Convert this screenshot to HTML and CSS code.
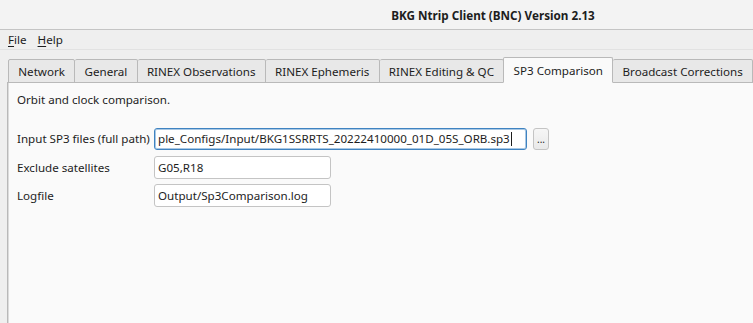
FILE: index.html
```html
<!DOCTYPE html>
<html lang="en">

<head>
  <meta charset="UTF-8">
  <meta name="viewport" content="width=device-width, initial-scale=1.0">
  <title>BKG Ntrip Client (BNC) Version 2.13</title>
  <link rel="stylesheet" href="styles.css">
</head>

<body>
  <header class="titlebar">
    <h1 class="window-title">BKG Ntrip Client (BNC) Version 2.13</h1>
  </header>

  <nav class="menubar">
    <span class="menu-item"><u>F</u>ile</span>
    <span class="menu-item"><u>H</u>elp</span>
  </nav>

  <main class="tab-widget">
    <ul class="tab-bar">
      <li class="tab">Network</li>
      <li class="tab">General</li>
      <li class="tab">RINEX Observations</li>
      <li class="tab">RINEX Ephemeris</li>
      <li class="tab">RINEX Editing &amp; QC</li>
      <li class="tab tab-active">SP3 Comparison</li>
      <li class="tab">Broadcast Corrections</li>
    </ul>

    <section class="tab-panel">
      <p class="panel-intro">Orbit and clock comparison.</p>

      <div class="form-grid">
        <label class="field-label">Input SP3 files (full path)</label>
        <div class="field-row">
          <div class="text-input input-wide input-focus">ple_Configs/Input/BKG1SSRRTS_20222410000_01D_05S_ORB.sp3<span class="caret"></span></div>
          <button class="browse-btn">...</button>
        </div>

        <label class="field-label">Exclude satellites</label>
        <div class="field-row">
          <div class="text-input">G05,R18</div>
        </div>

        <label class="field-label">Logfile</label>
        <div class="field-row">
          <div class="text-input">Output/Sp3Comparison.log</div>
        </div>
      </div>
    </section>
  </main>
</body>

</html>
```

FILE: styles.css
```css
*,
*::before,
*::after {
  box-sizing: border-box;
}

body,
h1,
p,
ul {
  margin: 0;
  padding: 0;
}

:root {
  /* COLORS */
  --bg-window: #efefef;
  --bg-title: #f3f3f3;
  --bg-panel: #fafafa;
  --bg-tab: #e8e8e8;
  --bg-input: #ffffff;

  --border-soft: #c4c4c4;
  --border-tab: #b9b9b9;
  --border-focus: #3f83c1;

  --text-main: #1d1d1d;

  /* FONT */
  --ff-ui: 'Noto Sans', 'Open Sans', sans-serif;
  --fs-ui: 11.6px;
}

body {
  height: 323px;
  overflow: hidden;

  display: flex;
  flex-direction: column;

  font-family: var(--ff-ui);
  font-size: var(--fs-ui);
  color: var(--text-main);

  background-color: var(--bg-window);
}

/* TITLE BAR */
.titlebar {
  display: flex;
  justify-content: center;
  align-items: center;

  height: 30px;
  padding-left: 233px;

  border-bottom: 1px solid var(--border-soft);

  background-color: var(--bg-title);
}

.window-title {
  font-size: 11.7px;
  font-weight: 700;
}

/* MENU BAR */
.menubar {
  display: flex;
  gap: 11px;
  align-items: center;

  height: 20px;
  padding-left: 8px;

  border-bottom: 1px solid #e2e2e2;
}

.menu-item u {
  text-decoration-thickness: 1px;
  text-underline-offset: 2px;
}

/* TABS */
.tab-widget {
  flex: 1;

  display: flex;
  flex-direction: column;

  padding-top: 7px;
  padding-left: 7px;
}

.tab-bar {
  display: flex;
  align-items: flex-end;

  list-style: none;

  padding-left: 1px;
  margin-bottom: -1px;
}

.tab {
  height: 24px;
  padding-inline: 9.3px;
  padding-top: 4px;

  white-space: nowrap;

  border: 1px solid var(--border-tab);
  border-left: none;
  border-radius: 2px 2px 0 0;

  background-color: var(--bg-tab);
}

.tab:first-child {
  border-left: 1px solid var(--border-tab);
}

.tab-active {
  position: relative;
  z-index: 2;

  height: 26px;
  padding-top: 5px;
  margin-left: -1px;

  border-left: 1px solid var(--border-tab);
  border-bottom-color: var(--bg-panel);

  background-color: var(--bg-panel);
}

.tab-active + .tab {
  border-left: none;
}

.tab-panel {
  flex: 1;

  padding: 9px 9px;

  border-top: 1px solid var(--border-tab);
  border-left: 1px solid var(--border-tab);
  box-shadow: inset 1px 0 0 #dcdcdc;

  background-color: var(--bg-panel);
}

/* FORM */
.form-grid {
  display: grid;
  grid-template-columns: 137px auto;
  grid-auto-rows: 23px;
  row-gap: 5.5px;
  align-items: center;

  margin-top: 20px;
}

.field-label {
  white-space: nowrap;
}

.field-row {
  display: flex;
  gap: 6px;
  align-items: center;
}

.text-input {
  width: 177px;
  height: 23px;
  padding: 3px 3px;

  overflow: hidden;
  white-space: nowrap;

  border: 1px solid var(--border-soft);
  border-radius: 3px;

  background-color: var(--bg-input);
}

.input-wide {
  width: 373px;
  height: 22px;
  padding-top: 2px;
}

.input-focus {
  border-color: var(--border-focus);
  box-shadow: inset 0 0 0 1px #a9c8e4;
}

.caret {
  display: inline-block;

  width: 1px;
  height: 14px;
  margin-left: 1px;

  vertical-align: -3px;

  background-color: var(--text-main);
}

.browse-btn {
  width: 16px;
  height: 22px;
  padding: 0;

  font-family: var(--ff-ui);
  font-size: 10px;
  color: var(--text-main);

  border: 1px solid var(--border-soft);
  border-radius: 3px;

  background: linear-gradient(#f6f6f6, #e9e9e9);
}
```
